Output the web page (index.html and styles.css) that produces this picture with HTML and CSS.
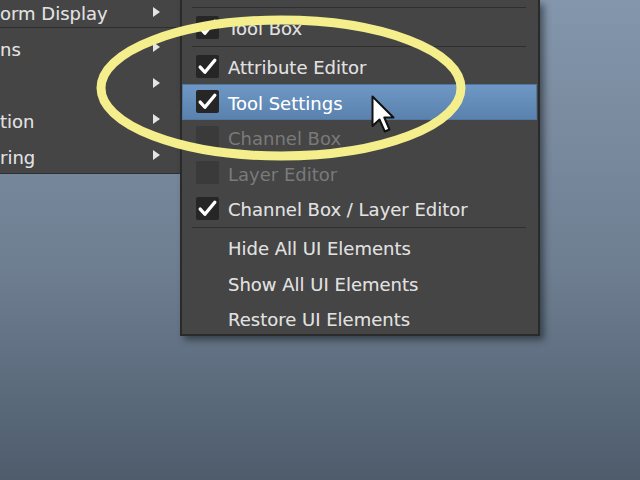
FILE: index.html
```html
<!DOCTYPE html>
<html lang="en">
<head>
<meta charset="UTF-8">
<title>Windows menu</title>
<link rel="stylesheet" href="styles.css">
</head>
<body>
<div class="screen">

  <div class="menu menu-left">
    <div class="item first"><span class="label">orm Display</span><span class="arrow"></span></div>
    <div class="sep"></div>
    <div class="item"><span class="label">ns</span><span class="arrow"></span></div>
    <div class="item"><span class="label"></span><span class="arrow"></span></div>
    <div class="item"><span class="label">tion</span><span class="arrow"></span></div>
    <div class="item"><span class="label">ring</span><span class="arrow"></span></div>
  </div>

  <div class="menu menu-right">
    <div class="sep"></div>
    <div class="item"><span class="box on"><svg viewBox="0 0 22 22"><path d="M4 11.5 L8.5 16.5 L18 5"/></svg></span><span class="label">Tool Box</span></div>
    <div class="sep"></div>
    <div class="item"><span class="box on"><svg viewBox="0 0 22 22"><path d="M4 11.5 L8.5 16.5 L18 5"/></svg></span><span class="label">Attribute Editor</span></div>
    <div class="item active"><span class="box on"><svg viewBox="0 0 22 22"><path d="M4 11.5 L8.5 16.5 L18 5"/></svg></span><span class="label">Tool Settings</span></div>
    <div class="item disabled"><span class="box"></span><span class="label">Channel Box</span></div>
    <div class="item disabled"><span class="box"></span><span class="label">Layer Editor</span></div>
    <div class="item"><span class="box on"><svg viewBox="0 0 22 22"><path d="M4 11.5 L8.5 16.5 L18 5"/></svg></span><span class="label">Channel Box / Layer Editor</span></div>
    <div class="sep"></div>
    <div class="item plain"><span class="label">Hide All UI Elements</span></div>
    <div class="item plain"><span class="label">Show All UI Elements</span></div>
    <div class="item plain"><span class="label">Restore UI Elements</span></div>
  </div>

  <svg class="ring" width="640" height="480" viewBox="0 0 640 480">
    <ellipse cx="281" cy="88" rx="180" ry="68"/>
  </svg>

  <svg class="cursor" width="26" height="40" viewBox="0 0 26 40">
    <path d="M1.5 1.5 L1.5 31 L8.5 24.5 L13.8 36.5 L18.5 34.5 L13.3 22.5 L22.5 22.5 Z"/>
  </svg>

</div>
</body>
</html>
```

FILE: styles.css
```css
body {
  margin: 0;
  font-family: 'DejaVu Sans', 'Liberation Sans', sans-serif;
  font-size: 18px;
  color: #e0e0e0;
}

.screen {
  position: relative;
  width: 640px;
  height: 480px;
  overflow: hidden;
  display: flex;
  align-items: flex-start;
  background: linear-gradient(to bottom, #8496ac 0%, #6f7f92 55%, #4e5c6c 100%);
}

.menu {
  background-color: #454545;
  box-sizing: border-box;
}

.label {
  padding-top: 3px;
  text-shadow: 0 0 0.6px rgba(255, 255, 255, 0.35);
}

.menu-left {
  width: 180px;
  height: 174px;
  border-bottom: 1px solid #303030;
}

.menu-left .item {
  height: 36px;
  display: flex;
  justify-content: space-between;
  align-items: center;
  padding-right: 20px;
}

.menu-left .item.first {
  height: 27px;
}

.menu-left .item.first .label {
  padding-top: 0;
}

.menu-left .sep {
  height: 1px;
  background-color: #2e2e2e;
  margin: 0 2px 2px 0;
}

.arrow {
  width: 0;
  height: 0;
  border-left: 7px solid #e4e4e4;
  border-top: 5px solid transparent;
  border-bottom: 5px solid transparent;
  margin-top: -3px;
}

.menu-right {
  width: 360px;
  height: 336px;
  padding-top: 6px;
  border: 2px solid #2a2a2a;
  border-top: none;
  box-shadow: 4px 4px 7px rgba(0, 0, 0, 0.45);
}

.menu-right .sep {
  height: 1px;
  background-color: #2f2f2f;
  margin: 1px 12px 1.5px 10px;
}

.menu-right .item {
  height: 35.5px;
  display: flex;
  align-items: center;
  padding-left: 14px;
  margin-right: 1px;
}

.menu-right .item.plain {
  padding-left: 46px;
}

.box {
  width: 23px;
  height: 23px;
  border-radius: 2px;
  background-color: #3a3a3a;
  margin-right: 9px;
  flex-shrink: 0;
}

.box.on {
  background-color: #262626;
}

.box svg {
  display: block;
  width: 23px;
  height: 23px;
}

.box svg path {
  fill: none;
  stroke: #ffffff;
  stroke-width: 3.2;
  stroke-linecap: round;
  stroke-linejoin: round;
}

.item.active {
  background: linear-gradient(to bottom, #6f98c6, #5a81ad);
  box-shadow: inset 0 0 0 1px #5277a0;
  color: #ffffff;
}

.item.disabled {
  color: #7a7a7a;
}

.item.disabled .label {
  text-shadow: none;
}

.ring {
  position: absolute;
  left: 0;
  top: 0;
  pointer-events: none;
}

.ring ellipse {
  fill: none;
  stroke: #f5ee8c;
  stroke-width: 9;
}

.cursor {
  position: absolute;
  left: 371px;
  top: 95px;
}

.cursor path {
  fill: #ffffff;
  stroke: #111111;
  stroke-width: 2;
  stroke-linejoin: round;
}
```
